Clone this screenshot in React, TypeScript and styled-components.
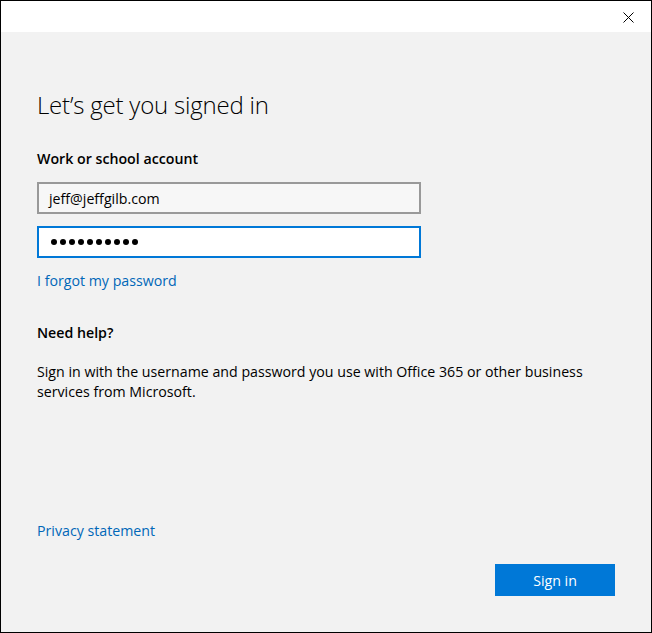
import React from "react";
import styled, { createGlobalStyle } from "styled-components";

const GlobalStyle = createGlobalStyle`
body {
    margin: 0;
    background: #ffffff;
    font-family: "Segoe UI", "Open Sans", "Noto Sans", sans-serif;
}
`

const Window = styled.div`
width: 652px;
height: 633px;
box-sizing: border-box;
border: 1px solid #000000;
display: flex;
flex-direction: column;
background-color: #f2f2f2;
`

const TitleBar = styled.div`
height: 31px;
flex-shrink: 0;
background-color: #ffffff;
display: flex;
justify-content: flex-end;
align-items: center;
padding-right: 17px;
`

const CloseButton = styled.button`
width: 12px;
height: 12px;
padding: 0;
border: none;
background: transparent;
display: flex;
align-items: center;
justify-content: center;
margin-top: 1px;
`

const Body = styled.div`
flex: 1;
display: flex;
flex-direction: column;
padding: 0 36px 36px 36px;
color: #000000;
font-size: 14.2px;
`

const Title = styled.h1`
margin: 57px 0 0 0;
font-size: 24px;
font-weight: 300;
line-height: 32px;
letter-spacing: -0.2px;
`

const Label = styled.div<{ top: number }>`
margin-top: ${props => props.top}px;
font-weight: 600;
line-height: 20px;
`

const Field = styled.div<{ focused?: boolean }>`
width: 384px;
height: 32px;
box-sizing: border-box;
border: 2px solid ${props => props.focused ? "#0078d7" : "#999999"};
background-color: ${props => props.focused ? "#ffffff" : "#f7f7f7"};
display: flex;
align-items: center;
padding-left: 10px;
`

const Fields = styled.div`
margin-top: 13px;
display: flex;
flex-direction: column;
gap: 12px;
`

const Dots = styled.div`
display: flex;
gap: 3px;
padding-left: 2px;
`

const Dot = styled.span`
width: 6px;
height: 6px;
border-radius: 50%;
background-color: #000000;
`

const Link = styled.a<{ top: number }>`
margin-top: ${props => props.top}px;
line-height: 20px;
color: #0067b8;
text-decoration: none;
cursor: pointer;
align-self: flex-start;
`

const Paragraph = styled.p`
margin: 19px 0 0 0;
line-height: 20px;
max-width: 560px;
`

const Footer = styled.div`
margin-top: auto;
display: flex;
flex-direction: column;
`

const ButtonRow = styled.div`
margin-top: 23px;
display: flex;
justify-content: flex-end;
`

const PrimaryButton = styled.button`
width: 120px;
height: 32px;
border: none;
background-color: #0078d7;
color: #ffffff;
font-family: inherit;
font-size: 14.2px;
cursor: pointer;
`

const CloseIcon = () => (
    <svg width="11" height="11" viewBox="0 0 11 11">
        <path d="M0.5 0.5 L10.5 10.5 M10.5 0.5 L0.5 10.5" stroke="#000" strokeWidth="1" />
    </svg>
)

const App = () => {
    return (
        <>
            <GlobalStyle />
            <Window>
                <TitleBar>
                    <CloseButton aria-label="Close"><CloseIcon /></CloseButton>
                </TitleBar>
                <Body>
                    <Title>Let’s get you signed in</Title>
                    <Label top={28}>Work or school account</Label>
                    <Fields>
                        <Field>jeff@jeffgilb.com</Field>
                        <Field focused>
                            <Dots>
                                {Array.from({ length: 10 }).map((_, i) => <Dot key={i} />)}
                            </Dots>
                        </Field>
                    </Fields>
                    <Link top={13}>I forgot my password</Link>
                    <Label top={32}>Need help?</Label>
                    <Paragraph>
                        Sign in with the username and password you use with Office 365 or other business services from Microsoft.
                    </Paragraph>
                    <Footer>
                        <Link top={0}>Privacy statement</Link>
                        <ButtonRow>
                            <PrimaryButton>Sign in</PrimaryButton>
                        </ButtonRow>
                    </Footer>
                </Body>
            </Window>
        </>
    );
}

export default App;
